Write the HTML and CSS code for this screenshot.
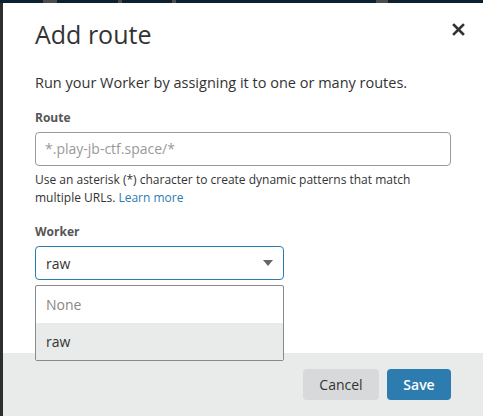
FILE: index.html
```html
<!DOCTYPE html>
<html lang="en">
<head>
<meta charset="utf-8">
<title>Add route</title>
<link rel="stylesheet" href="styles.css">
</head>
<body>
<div class="backdrop">
  <div class="topstrip">
    <span class="seg seg-a"></span>
    <span class="seg seg-b"></span>
    <span class="seg seg-c"></span>
    <span class="seg seg-d"></span>
  </div>
  <div class="row">
    <div class="leftstrip"></div>
    <div class="modal">
      <div class="modal-body">
        <div class="header">
          <h1 class="title">Add route</h1>
          <button class="close" aria-label="Close">
            <svg width="13" height="13" viewBox="0 0 13 13"><path d="M2 2 L11 11 M11 2 L2 11" stroke="#333" stroke-width="2.6" stroke-linecap="square"/></svg>
          </button>
        </div>
        <p class="desc">Run your Worker by assigning it to one or many routes.</p>
        <label class="label">Route</label>
        <div class="input">*.play-jb-ctf.space/*</div>
        <p class="help">Use an asterisk (*) character to create dynamic patterns that match multiple URLs.&nbsp;<a class="link">Learn more</a></p>
        <label class="label label-worker">Worker</label>
        <div class="select-wrap">
          <div class="select">
            <span>raw</span>
            <svg width="10" height="6" viewBox="0 0 10 6"><path d="M0 0 H10 L5 6 Z" fill="#666"/></svg>
          </div>
          <ul class="menu">
            <li class="opt opt-none">None</li>
            <li class="opt opt-active">raw</li>
          </ul>
        </div>
      </div>
      <div class="footer">
        <button class="btn btn-cancel">Cancel</button>
        <button class="btn btn-save">Save</button>
      </div>
    </div>
  </div>
</div>
</body>
</html>
```
FILE: styles.css
```css
* { box-sizing: border-box; }
html, body { margin: 0; padding: 0; }
body {
  width: 483px;
  height: 416px;
  overflow: hidden;
  background: #2b2b2b;
  font-family: "Open Sans", "Noto Sans", sans-serif;
  color: #333;
}
.backdrop { display: flex; flex-direction: column; height: 416px; }
.topstrip {
  height: 3px;
  background: #0c2130;
  display: flex;
}
.seg { display: block; height: 3px; background: #4a4d50; }
.seg-a { margin-left: 43px; width: 14px; }
.seg-b { margin-left: 61px; width: 4px; }
.seg-c { margin-left: 50px; width: 4px; }
.seg-d { margin-left: 200px; width: 12px; }
.row { display: flex; flex: 1; }
.leftstrip { width: 3px; background: #2e2e2e; }
.modal {
  flex: 1;
  background: #fff;
  display: flex;
  flex-direction: column;
}
.modal-body {
  height: 350px;
  padding: 14px 32px 0 32px;
}
.header {
  display: flex;
  justify-content: space-between;
  align-items: flex-start;
}
.title {
  margin: 0;
  font-weight: 400;
  font-size: 25px;
  line-height: 34px;
  color: #333;
}
.close {
  border: 0;
  background: none;
  padding: 0;
  margin: 6px -14px 0 0;
  width: 13px;
  height: 13px;
  display: flex;
}
.desc {
  margin: 22px 0 0 0;
  font-size: 14.5px;
  line-height: 20px;
  color: #333;
}
.label {
  display: block;
  margin-top: 16px;
  font-size: 12px;
  font-weight: 700;
  line-height: 18px;
  color: #555;
}
.label-worker { margin-top: 16px; }
.input {
  margin-top: 5px;
  height: 34px;
  border: 1px solid #999;
  border-radius: 4px;
  padding: 0 9px;
  font-size: 14px;
  line-height: 32px;
  color: #999;
}
.help {
  margin: 5px 0 0 0;
  font-size: 12px;
  line-height: 18px;
  color: #333;
}
.link { color: #2c7cb0; }
.select-wrap {
  position: relative;
  width: 249px;
  margin-top: 5px;
}
.select {
  height: 34px;
  border: 1px solid #2c7cb0;
  border-radius: 4px;
  padding: 0 10px 0 10px;
  display: flex;
  align-items: center;
  justify-content: space-between;
  font-size: 14px;
  color: #333;
}
.menu {
  position: absolute;
  left: 0;
  right: 0;
  top: 39px;
  margin: 0;
  padding: 0;
  list-style: none;
  border: 1px solid #8a8a8a;
  border-radius: 2px;
  background: #fff;
  z-index: 2;
}
.opt {
  height: 37px;
  line-height: 37px;
  padding-left: 10px;
  font-size: 14px;
}
.opt-none { color: #888; }
.opt-active { background: #e9eaea; color: #333; }
.footer {
  flex: 1;
  background: #e9eaea;
  display: flex;
  justify-content: flex-end;
  align-items: flex-start;
  gap: 8px;
  padding: 16px 32px 0 0;
}
.btn {
  border: 0;
  border-radius: 4px;
  height: 31px;
  font-family: inherit;
  font-size: 14px;
}
.btn-cancel { width: 76px; background: #d8d9da; color: #333; }
.btn-save { width: 64px; background: #2c7cb0; color: #fff; font-weight: 600; }
```
